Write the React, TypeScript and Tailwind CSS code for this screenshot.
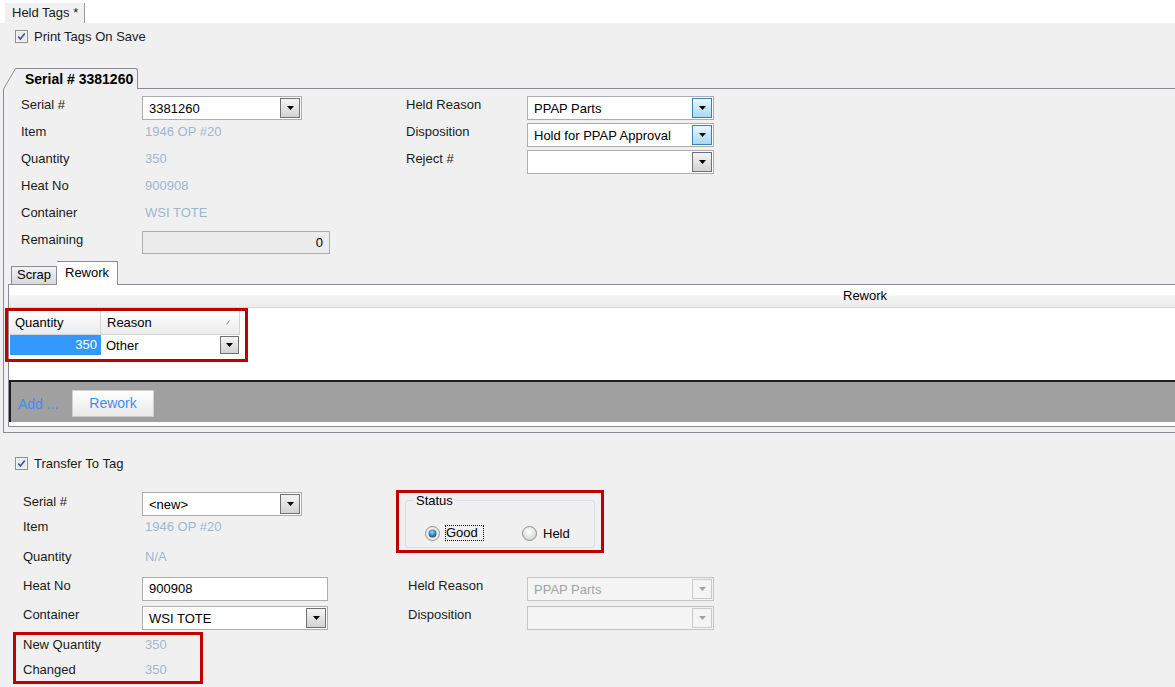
import React from 'react';

type BtnKind = 'gray' | 'blue' | 'off';

function Arrow({ color = '#000' }: { color?: string }) {
  return (
    <svg width="7" height="4" viewBox="0 0 7 4" className="shrink-0">
      <path d="M0 0h7L3.5 4z" fill={color} />
    </svg>
  );
}

function DropButton({ kind = 'gray', className = '' }: { kind?: BtnKind; className?: string }) {
  const styles = {
    gray: 'border-[#707070] bg-linear-to-b from-[#f4f4f4] to-[#d3d3d3]',
    blue: 'border-[#3c7fb1] bg-linear-to-b from-[#eaf6fd] to-[#a7d9f5]',
    off: 'border-[#c9c9c9] bg-[#f4f4f4]',
  }[kind];
  return (
    <div className={`shrink-0 flex items-center justify-center border ${styles} ${className}`}>
      <Arrow color={kind === 'off' ? '#a3a3a3' : '#000'} />
    </div>
  );
}

function Combo({ value = '', w, kind = 'gray', disabled = false }: { value?: string; w: string; kind?: BtnKind; disabled?: boolean }) {
  return (
    <div
      className={`${w} h-[24px] flex items-center border ${
        disabled ? 'border-[#c4c4c4] bg-[#f4f4f4] text-[#a3a3a3]' : 'border-[#abadb3] bg-white text-black'
      }`}
    >
      <span className="flex-1 pl-[6px] truncate">{value}</span>
      <DropButton kind={disabled ? 'off' : kind} className="w-[20px] h-[20px] mr-[1px]" />
    </div>
  );
}

function CheckBox() {
  return (
    <svg width="13" height="13" viewBox="0 0 13 13" className="shrink-0">
      <rect x="0.5" y="0.5" width="12" height="12" fill="#f4f4f4" stroke="#8e8f8f" />
      <rect x="2" y="2" width="9" height="9" fill="#e9e9e9" />
      <path d="M3.2 6.4 L5.4 9 L9.8 3.4" fill="none" stroke="#3f5592" strokeWidth="1.6" />
    </svg>
  );
}

function Radio({ checked }: { checked?: boolean }) {
  return (
    <svg width="15" height="15" viewBox="0 0 15 15" className="shrink-0">
      <defs>
        <radialGradient id={checked ? 'rdOn' : 'rdOff'} cx="45%" cy="35%" r="65%">
          <stop offset="0" stopColor={checked ? '#8fdcff' : '#ffffff'} />
          <stop offset="1" stopColor={checked ? '#0b4a7c' : '#d3d3d3'} />
        </radialGradient>
      </defs>
      <circle cx="7.5" cy="7.5" r="7" fill={checked ? '#ececec' : `url(#rdOff)`} stroke="#8e8f8f" />
      {checked && <circle cx="7.5" cy="7.5" r="4" fill="url(#rdOn)" />}
    </svg>
  );
}

function Row({ label, h = 'h-[27px]', lw = 'w-[121px]', pt = 'pt-[1px]', children }: { label: string; h?: string; lw?: string; pt?: string; children?: React.ReactNode }) {
  return (
    <div className={`flex ${h}`}>
      <div className={`${lw} ${pt} shrink-0`}>{label}</div>
      {children}
    </div>
  );
}

function Val({ children, pt = 'pt-[1px]' }: { children: React.ReactNode; pt?: string }) {
  return <div className={`pl-[3px] ${pt} text-[#9fb6d2]`}>{children}</div>;
}

export default function App() {
  return (
    <div className="w-[1175px] h-[687px] overflow-hidden bg-[#f0f0f0] font-['Liberation_Sans',Arial,sans-serif] text-[13px] leading-[15px] text-[#1a1a1a]">
      {/* document tab strip */}
      <div className="h-[23px] bg-white flex items-end pl-[5px]">
        <div className="h-[20px] w-[80px] bg-[#f0f0f0] border-r border-[#9a9a9a] pl-[7px] leading-[20px]">Held Tags *</div>
      </div>

      <div className="h-[45px] pt-[7px] pl-[15px]">
        <div className="flex items-center gap-[6px] h-[13px]">
          <CheckBox />
          <span>Print Tags On Save</span>
        </div>
      </div>

      {/* serial tab header */}
      <div className="flex h-[21px] pl-[3px]">
        <svg width="13" height="21" viewBox="0 0 13 21" className="shrink-0">
          <path d="M0 21 L12 0.5 H13 V21 Z" fill="#f0f0f0" />
          <path d="M0.5 21 L12.5 0.5 H13" fill="none" stroke="#898c95" />
        </svg>
        <div className="w-[122px] shrink-0 border-t border-r border-[#898c95] rounded-tr-[3px] pl-[9px] font-bold text-[14px] leading-[20px] text-black">
          Serial # 3381260
        </div>
        <div className="flex-1 border-b border-[#898c95]" />
      </div>

      <div className="ml-[3px] border-l border-b border-[#898c95] pt-[7px] pb-[5px]">
        <div className="flex pl-[17px]">
          <div className="w-[385px]">
            <Row label="Serial #">
              <Combo value="3381260" w="w-[160px]" />
            </Row>
            <Row label="Item"><Val>1946 OP #20</Val></Row>
            <Row label="Quantity"><Val>350</Val></Row>
            <Row label="Heat No"><Val>900908</Val></Row>
            <Row label="Container"><Val>WSI TOTE</Val></Row>
            <Row label="Remaining">
              <div className="w-[188px] h-[23px] border border-[#abadb3] bg-[#ececec] text-right pr-[6px] leading-[21px] text-black">0</div>
            </Row>
          </div>
          <div>
            <Row label="Held Reason">
              <Combo value="PPAP Parts" w="w-[187px]" kind="blue" />
            </Row>
            <Row label="Disposition">
              <Combo value="Hold for PPAP Approval" w="w-[187px]" kind="blue" />
            </Row>
            <Row label="Reject #">
              <Combo w="w-[187px]" />
            </Row>
          </div>
        </div>

        {/* scrap / rework tabs */}
        <div className="flex items-end h-[24px] ml-[4px] mt-[3px]">
          <div className="w-[3px] h-full border-b border-[#898c95]" />
          <div className="w-[46px] h-[19px] border border-[#898c95] bg-linear-to-b from-[#f3f3f3] to-[#d9d9d9] pl-[5px] text-black">Scrap</div>
          <div className="w-[61px] h-[24px] border-t border-r border-[#898c95] bg-white pl-[8px] pt-[3px] text-black">Rework</div>
          <div className="flex-1 h-full border-b border-[#898c95]" />
        </div>

        <div className="ml-[4px] border-l border-b border-[#898c95] bg-white pb-[4px]">
          <div className="h-[23px] border-b border-[#d5d5d5] bg-[linear-gradient(to_bottom,#ffffff_0%,#ffffff_45%,#f3f3f4_50%,#ececee_100%)] pl-[834px] leading-[22px] text-black">
            Rework
          </div>
          <div className="h-[72px]">
            <div className="-ml-[4px] w-[243px] border-[3px] border-[#c00000] pl-[2px] pb-[4px]">
              <div className="flex h-[24px]">
                <div className="w-[91px] border-r border-b border-[#d5d5d5] bg-linear-to-b from-white to-[#ebebeb] pl-[5px] leading-[23px] text-black">Quantity</div>
                <div className="w-[139px] border-r border-b border-[#d5d5d5] bg-linear-to-b from-white to-[#ebebeb] pl-[6px] pr-[9px] flex items-center justify-between text-black">
                  <span>Reason</span>
                  <svg width="4" height="5" viewBox="0 0 4 5">
                    <path d="M0.5 4.5 L3.5 0.5" stroke="#8a8a8a" strokeWidth="1" />
                  </svg>
                </div>
              </div>
              <div className="flex h-[20px]">
                <div className="w-[91px] bg-[#3399ff] text-white text-right pr-[4px] leading-[20px]">350</div>
                <div className="w-[139px] flex items-center justify-between pl-[5px] text-black">
                  <span>Other</span>
                  <DropButton className="w-[19px] h-[18px] mr-[1px]" />
                </div>
              </div>
            </div>
          </div>
          <div className="h-[42px] border-t-2 border-l-2 border-[#1e1e1e] bg-[#a0a0a0] flex items-start pt-[8px] pl-[7px] text-[14px]">
            <div className="flex items-center h-[27px]">
              <span className="w-[54px] text-[#3f8ef5] pt-[2px]">Add ...</span>
              <div className="w-[82px] h-[27px] border border-[#cfcfcf] bg-linear-to-b from-white to-[#e9e9e9] flex items-center justify-center text-[#3f8ef5]">
                Rework
              </div>
            </div>
          </div>
        </div>
      </div>

      {/* transfer */}
      <div className="mt-[24px] pl-[15px]">
        <div className="flex items-center gap-[6px] h-[13px]">
          <CheckBox />
          <span>Transfer To Tag</span>
        </div>
      </div>

      <div className="flex mt-[20px]">
        <div className="w-[396px] pl-[13px] pt-[2px]">
          <div className="pl-[10px]">
            <Row label="Serial #" lw="w-[119px]" pt="pt-[2px]">
              <Combo value="<new>" w="w-[160px]" />
            </Row>
            <Row label="Item" lw="w-[119px]" h="h-[29px]" pt="pt-0">
              <Val pt="pt-0">1946 OP #20</Val>
            </Row>
            <Row label="Quantity" lw="w-[119px]" h="h-[29px]">
              <Val>N/A</Val>
            </Row>
            <Row label="Heat No" lw="w-[119px]" h="h-[29px]">
              <div className="w-[186px] h-[24px] border border-[#abadb3] bg-white pl-[6px] leading-[22px] text-black">900908</div>
            </Row>
            <Row label="Container" lw="w-[119px]" h="h-[26px]">
              <Combo value="WSI TOTE" w="w-[186px]" />
            </Row>
          </div>
          <div className="w-[190px] h-[52px] border-[3px] border-[#c00000] pl-[7px] pt-[2px]">
            <Row label="New Quantity" lw="w-[119px]" h="h-[25px]" pt="pt-0">
              <Val pt="pt-0">350</Val>
            </Row>
            <Row label="Changed" lw="w-[119px]" h="h-[25px]" pt="pt-0">
              <Val pt="pt-0">350</Val>
            </Row>
          </div>
        </div>

        <div>
          <div className="w-[208px] h-[63px] border-[3px] border-[#c00000] pt-[7px] px-[6px]">
            <div className="h-[48px] border border-[#d5dfe5] rounded-[3px]">
              <div className="-mt-[8px] ml-[8px] px-[2px] w-fit bg-[#f0f0f0] text-black">Status</div>
              <div className="flex items-center mt-[17px] pl-[19px] h-[16px] text-black">
                <Radio checked />
                <div className="ml-[5px] w-[39px] h-[16px] border border-dotted border-black leading-[14px]">Good</div>
                <div className="ml-[38px]"><Radio /></div>
                <span className="ml-[6px]">Held</span>
              </div>
            </div>
          </div>
          <div className="mt-[24px] pl-[12px]">
            <Row label="Held Reason" lw="w-[119px]" h="h-[29px]">
              <Combo value="PPAP Parts" w="w-[187px]" disabled />
            </Row>
            <Row label="Disposition" lw="w-[119px]" h="h-[26px]">
              <Combo w="w-[187px]" disabled />
            </Row>
          </div>
        </div>
      </div>
    </div>
  );
}
